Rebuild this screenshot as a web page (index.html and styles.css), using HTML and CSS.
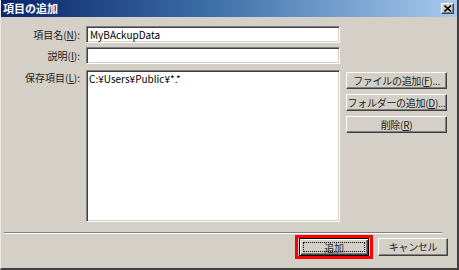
FILE: index.html
```html
<!DOCTYPE html>
<html lang="ja">
<head>
  <meta charset="UTF-8" />
  <title>項目の追加</title>
  <link rel="stylesheet" href="styles.css">
</head>
<body>

  <div class="window">
    <!-- Title bar -->
    <div class="titlebar">
      <span class="title">項目の追加</span>
      <button class="close" aria-label="閉じる">
        <svg width="8" height="7" viewBox="0 0 8 7">
          <path d="M0.5 0.5 L7 6.5 M7 0.5 L0.5 6.5" stroke="#000" stroke-width="1.6" fill="none"/>
        </svg>
      </button>
    </div>

    <div class="dialog">
      <div class="form">
        <label class="label">項目名(<u>N</u>):</label>
        <div class="field">MyBAckupData</div>
        <div></div>

        <label class="label">説明(<u>I</u>):</label>
        <div class="field"></div>
        <div></div>

        <label class="label label-top">保存項目(<u>L</u>):</label>
        <div class="field listbox">C:¥Users¥Public¥*.*</div>
        <div class="side-buttons">
          <button class="btn">ファイルの追加(<u>F</u>)...</button>
          <button class="btn">フォルダーの追加(<u>D</u>)...</button>
          <button class="btn">削除(<u>R</u>)</button>
        </div>
      </div>

      <div class="separator"></div>

      <div class="footer">
        <div class="highlight">
          <button class="btn btn-default"><span class="focus">追加</span></button>
        </div>
        <button class="btn btn-wide">キャンセル</button>
      </div>
    </div>
  </div>

</body>
</html>
```

FILE: styles.css
```css
* {
  margin: 0;
  padding: 0;
  box-sizing: border-box;
  font-family: "Noto Sans CJK JP", "DejaVu Sans", sans-serif;
}

body {
  width: 459px;
  height: 270px;
  overflow: hidden;
  background: #d4d0c8;
}

.window {
  width: 459px;
  height: 270px;
  background: #d4d0c8;
  border-right: 2px solid #404040;
  border-bottom: 2px solid #404040;
  border-left: 1px solid #ece9e2;
  display: flex;
  flex-direction: column;
}

/* Title bar */
.titlebar {
  height: 17px;
  display: flex;
  align-items: center;
  justify-content: space-between;
  padding: 0 3px 0 2px;
  background: linear-gradient(to right, #0a246a, #3a6ea5 45%, #a6caf0);
}

.title {
  color: #fff;
  font-weight: bold;
  font-size: 11px;
  line-height: 17px;
}

.close {
  width: 13px;
  height: 11px;
  display: flex;
  align-items: center;
  justify-content: center;
  background: #d4d0c8;
  border: 1px solid;
  border-color: #fff #404040 #404040 #fff;
  box-shadow: inset -1px -1px #808080;
}

/* Dialog body */
.dialog {
  flex: 1;
  padding-top: 9px;
  display: flex;
  flex-direction: column;
}

.form {
  display: grid;
  grid-template-columns: 72px 254px 101px;
  grid-template-rows: 17px 17px 154px;
  column-gap: 6px;
  row-gap: 4px;
  padding-left: 7px;
}

.label {
  font-size: 10px;
  color: #222;
  text-align: right;
  line-height: 17px;
  white-space: nowrap;
}

.label-top {
  margin-top: 2px;
  line-height: 15px;
}

.field {
  background: #fff;
  border: 1px solid;
  border-color: #808080 #fff #fff #808080;
  box-shadow: inset 1px 1px #404040, inset -1px -1px #d4d0c8;
  font-size: 10px;
  line-height: 14px;
  padding: 1px 3px;
  color: #000;
}

.listbox {
  margin-top: 2px;
  padding: 1px 2px;
}

.side-buttons {
  margin-top: 4px;
  display: flex;
  flex-direction: column;
  gap: 5px;
}

/* Buttons */
.btn {
  height: 17px;
  padding: 0;
  background: #d4d0c8;
  border: 1px solid;
  border-color: #fff #404040 #404040 #fff;
  box-shadow: inset -1px -1px #808080;
  font-size: 10px;
  color: #222;
  line-height: 14px;
  white-space: nowrap;
  letter-spacing: -0.3px;
}

.separator {
  margin: 10px 15px 0 3px;
  height: 2px;
  border-top: 1px solid #808080;
  border-bottom: 1px solid #fff;
}

.footer {
  margin-top: 1px;
  display: flex;
  justify-content: flex-end;
  align-items: center;
  gap: 5px;
  padding-right: 9px;
}

.highlight {
  border: 3px solid #f00;
  padding: 0 1px;
  height: 24px;
  display: flex;
  align-items: center;
}

.btn-default {
  width: 70px;
  height: 18px;
  border: 1px solid #000;
  box-shadow: inset 1px 1px #fff, inset -1px -1px #404040, inset -2px -2px #808080;
  display: flex;
  align-items: center;
  justify-content: center;
  padding: 3px;
}

.focus {
  flex: 1;
  height: 100%;
  border: 1px dotted #000;
  line-height: 9px;
}

.btn-wide {
  width: 70px;
  height: 18px;
}
```
